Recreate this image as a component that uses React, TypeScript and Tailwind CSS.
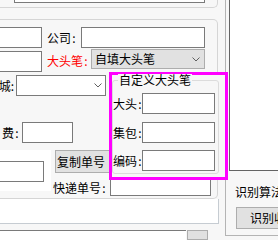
import React from 'react'

const box = 'bg-white border-[#7a7a7a]'

function Colon() {
  return <span className="inline-block w-[6px] text-center">:</span>
}

function Chevron() {
  return (
    <svg width="8" height="5" viewBox="0 0 8 5" className="block">
      <path d="M0.5 0.5 L4 4 L7.5 0.5" fill="none" stroke="#606060" strokeWidth="1" />
    </svg>
  )
}

function Field({ label }: { label: string }) {
  return (
    <div className="flex items-center h-[21px]">
      <div className="w-[29px] whitespace-nowrap">
        {label}
        <Colon />
      </div>
      <div className={`w-[73px] h-[21px] border ${box}`} />
    </div>
  )
}

export default function App() {
  return (
    <div className="relative w-[278px] h-[240px] overflow-hidden flex bg-[#f7f7f7] text-[12px] leading-[12px] text-black font-['Noto_Sans_CJK_SC','Noto_Sans',sans-serif]">
      {/* left side */}
      <div className="w-[225px] shrink-0 flex flex-col">
        <div className="w-[218px] h-[10px] border-r border-b border-[#d5d5d5] rounded-br-[5px]">
          <div className={`ml-[14px] w-[191px] h-[3px] border-x border-b ${box}`} />
        </div>

        <div className="mt-[11px] w-[218px] h-[180px] shrink-0 border-y border-r border-[#d5d5d5] rounded-r-[5px] flex flex-col">
          <div className="mt-[7px] flex items-center h-[21px]">
            <div className={`w-[42px] h-[21px] border-y border-r ${box}`} />
            <div className="ml-[5px] w-[34px] whitespace-nowrap">
              公司
              <Colon />
            </div>
            <div className={`w-[124px] h-[21px] border ${box}`} />
          </div>

          <div className="mt-[1px] flex items-start">
            <div className={`mt-[2px] w-[42px] h-[21px] border-y border-r ${box}`} />
            <div className="ml-[5px] mt-[1px] h-[21px] w-[44px] flex items-center whitespace-nowrap text-[#ff0000]">
              大头笔
              <Colon />
            </div>
            <div className="w-[114px] h-[20px] bg-[#e1e1e1] border border-[#adadad] flex items-center justify-between pl-[3px] pr-[4px]">
              <span>自填大头笔</span>
              <Chevron />
            </div>
          </div>

          <div className="mt-[3px] flex items-center h-[21px]">
            <div className="w-[14px] mr-[2px] flex justify-end whitespace-nowrap">
              城<Colon />
            </div>
            <div className={`w-[90px] h-[21px] border flex items-center justify-end pr-[3px] ${box}`}>
              <Chevron />
            </div>
          </div>

          <div className="mt-[1px] w-[120px] h-[1px] bg-[#7a7a7a]" />

          <div className="mt-[25px] flex items-center h-[21px]">
            <div className="w-[20px] mr-[2px] flex justify-end whitespace-nowrap">
              费<Colon />
            </div>
            <div className={`w-[51px] h-[21px] border ${box}`} />
          </div>

          <div className="mt-[7px] flex items-start">
            <div className="w-[51px] h-[41px] bg-white pt-[11px]">
              <div className={`w-[44px] h-[21px] border-y border-r ${box}`} />
            </div>
            <div className="ml-[4px] flex flex-col">
              <div className="w-[56px] h-[23px] bg-[#e1e1e1] border border-[#adadad] flex items-center pl-[1px] whitespace-nowrap">
                复制单号
              </div>
              <div className="-ml-[2px] flex items-start">
                <div className="mt-[4px] w-[57px] h-[21px] flex items-center whitespace-nowrap">
                  快递单号
                  <Colon />
                </div>
                <div className={`mt-[2px] w-[101px] h-[21px] border ${box}`} />
              </div>
            </div>
          </div>
        </div>

        <div className="w-[219px] h-[24px] shrink-0 bg-white border-r border-[#c6ccd2]" />
        <div className="w-[219px] h-[1px] bg-[#c6ccd2]" />
        <div className="mt-[6px] flex items-start">
          <div className="w-[186px] h-[10px] bg-white border-t border-[#7a7a7a]" />
          <div className="ml-[1px] w-[21px] h-[10px] bg-[#e1e1e1] border border-[#adadad]" />
        </div>
      </div>

      {/* right side */}
      <div className="flex-1 h-[236px] border-l border-b border-[#b4b4b4] flex flex-col">
        <div className="ml-[3px] h-[171px] bg-white border-l border-b border-[#646464]" />
        <div className="ml-[9px] mt-[15px] whitespace-nowrap">识别算法</div>
        <div className="ml-[10px] mt-[9px] h-[22px] bg-[#e1e1e1] border border-[#adadad] flex items-center pl-[13px] whitespace-nowrap">
          识别收件
        </div>
      </div>

      {/* highlighted group */}
      <div className="absolute left-[109px] top-[72px] w-[119px] h-[108px] border-[3px] border-[#ff00ff] bg-[#f7f7f7] flex flex-col">
        <div className="relative mt-[5px] w-[107px] h-[94px] border border-[#dcdcdc] rounded-[3px] flex flex-col">
          <span className="absolute -top-[7px] left-[5px] px-[1px] bg-[#f7f7f7] whitespace-nowrap">自定义大头笔</span>
          <div className="mt-[12px]">
            <Field label="大头" />
          </div>
          <div className="mt-[8px]">
            <Field label="集包" />
          </div>
          <div className="mt-[7px]">
            <Field label="编码" />
          </div>
        </div>
      </div>
    </div>
  )
}
